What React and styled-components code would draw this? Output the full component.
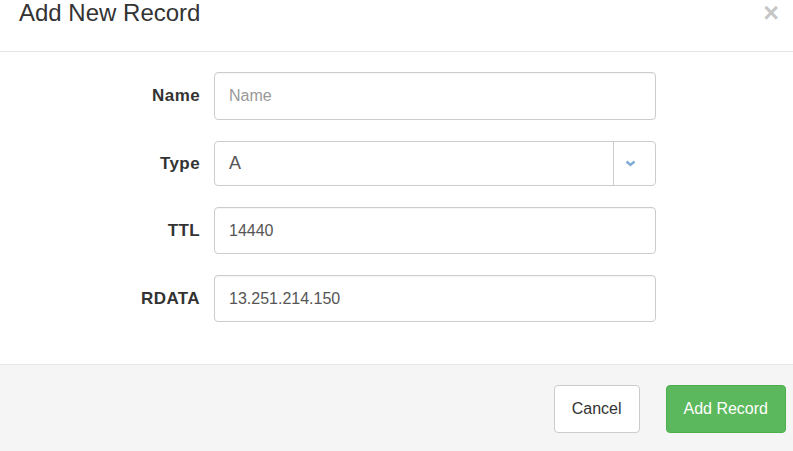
import React from 'react';
import styled, { createGlobalStyle } from 'styled-components';

const GlobalStyle = createGlobalStyle`
    html, body {
        margin: 0;
        padding: 0;
        background: #fff;
        font-family: 'Liberation Sans', Arial, sans-serif;
        color: #333;
    }
`;

const Modal = styled.div`
    display: flex;
    flex-direction: column;
    min-height: 451px;
`;

const Header = styled.header`
    position: relative;
    height: 51px;
    padding: 0 19px;
    border-bottom: 1px solid #e5e5e5;
`;

const Title = styled.h4`
    margin: 0;
    font-size: 24px;
    line-height: 26px;
    font-weight: 400;
    color: #333;
`;

const Close = styled.button`
    position: absolute;
    top: 0;
    right: 14px;
    padding: 0;
    border: 0;
    background: transparent;
    font-family: 'Liberation Sans', Arial, sans-serif;
    font-size: 27px;
    line-height: 26px;
    font-weight: 700;
    color: #000;
    opacity: 0.22;
    cursor: pointer;
`;

const Body = styled.form`
    padding: 20px 0 21px;
    border-bottom: 1px solid #e5e5e5;
`;

const Row = styled.div`
    display: grid;
    grid-template-columns: 200px 442px;
    column-gap: 14px;
    align-items: center;
    margin-bottom: 21px;
`;

const Label = styled.label`
    text-align: right;
    font-size: 17px;
    letter-spacing: 0.4px;
    font-weight: 700;
    color: #333;
`;

const Input = styled.input`
    box-sizing: border-box;
    width: 100%;
    height: ${(p) => p.$h || 47}px;
    padding: 0 14px;
    border: 1px solid #ccc;
    border-radius: 4px;
    font-family: 'Liberation Sans', Arial, sans-serif;
    font-size: 16px;
    color: #555;
    outline: none;
    box-shadow: inset 0 1px 1px rgba(0, 0, 0, 0.04);

    &::placeholder {
        color: #999;
    }
`;

const Select = styled.div`
    box-sizing: border-box;
    display: flex;
    align-items: center;
    height: 45px;
    border: 1px solid #ccc;
    border-radius: 4px;
`;

const SelectValue = styled.span`
    flex: 1;
    padding-left: 14px;
    font-size: 18px;
    color: #555;
`;

const SelectArrow = styled.span`
    box-sizing: border-box;
    display: flex;
    align-items: center;
    width: 42px;
    height: 43px;
    padding-left: 11px;
    border-left: 1px solid #ccc;
`;

const Footer = styled.footer`
    flex: 1;
    display: flex;
    justify-content: flex-end;
    align-items: flex-start;
    gap: 26px;
    padding: 20px 7px 0 0;
    background: #f5f5f5;
`;

const Button = styled.button`
    height: 48px;
    padding: 0 17px;
    border-radius: 4px;
    border: 1px solid ${(p) => (p.$primary ? '#4cae4c' : '#ccc')};
    background: ${(p) => (p.$primary ? '#5cb85c' : '#fff')};
    color: ${(p) => (p.$primary ? '#fff' : '#333')};
    font-family: 'Liberation Sans', Arial, sans-serif;
    font-size: 16px;
    cursor: pointer;
`;

const App = () => {
    return (
        <>
            <GlobalStyle />
            <Modal>
                <Header>
                    <Title>Add New Record</Title>
                    <Close type='button' aria-label='Close'>
                        ×
                    </Close>
                </Header>

                <Body>
                    <Row>
                        <Label>Name</Label>
                        <Input $h={48} placeholder='Name' />
                    </Row>
                    <Row>
                        <Label>Type</Label>
                        <Select>
                            <SelectValue>A</SelectValue>
                            <SelectArrow>
                                <svg width='11' height='7' viewBox='0 0 11 7'>
                                    <path
                                        d='M1.5 1.5 L5.5 5 L9.5 1.5'
                                        fill='none'
                                        stroke='#7fabd6'
                                        strokeWidth='2.4'
                                    />
                                </svg>
                            </SelectArrow>
                        </Select>
                    </Row>
                    <Row>
                        <Label>TTL</Label>
                        <Input defaultValue='14440' />
                    </Row>
                    <Row>
                        <Label>RDATA</Label>
                        <Input defaultValue='13.251.214.150' />
                    </Row>
                </Body>

                <Footer>
                    <Button type='button'>Cancel</Button>
                    <Button type='button' $primary>
                        Add Record
                    </Button>
                </Footer>
            </Modal>
        </>
    );
};

export default App;
